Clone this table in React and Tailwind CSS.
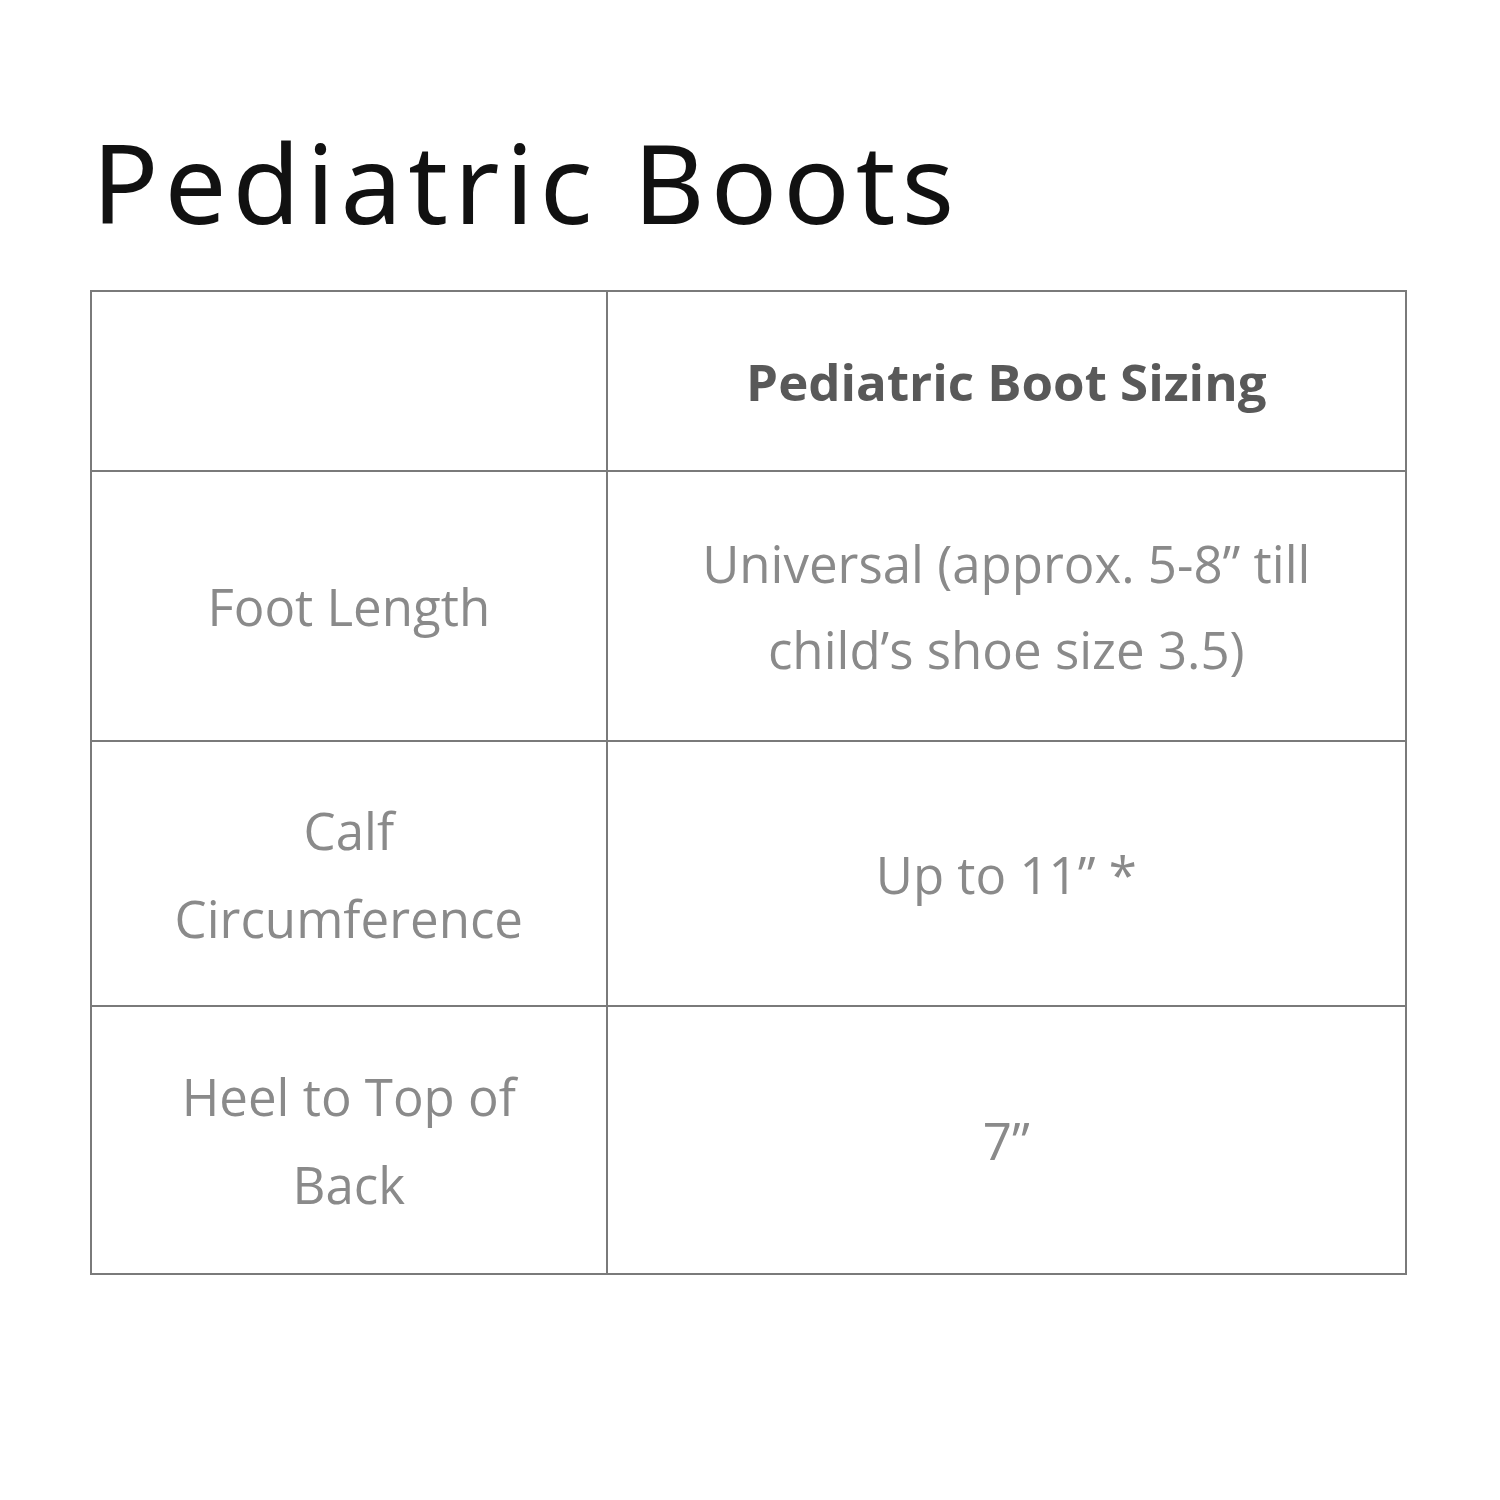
export default function App() {
  const cell = "border-2 border-[#7a7a7a] text-center align-middle px-4";
  const body = { fontFamily: '"Open Sans", "Noto Sans", sans-serif' };
  return (
    <div className="w-[1500px] h-[1500px] bg-white">
      <div className="pt-[116px] pl-[92px]">
        <h1
          className="text-[110px] leading-[130px] text-[#111] font-normal tracking-[6px]"
          style={{ fontFamily: '"Noto Sans", "Open Sans", sans-serif' }}
        >
          Pediatric Boots
        </h1>
      </div>
      <div className="pl-[90px] pt-[44px]">
        <table className="border-collapse w-[1317px] text-[#8a8a8a]" style={body}>
          <colgroup>
            <col className="w-[516px]" />
            <col className="w-[801px]" />
          </colgroup>
          <tbody>
            <tr className="h-[180px]">
              <td className={cell}></td>
              <td className={cell + " text-[51px] font-bold text-[#595959]"}>Pediatric Boot Sizing</td>
            </tr>
            <tr className="h-[270px]">
              <td className={cell + " text-[51px] leading-[86px]"}>Foot Length</td>
              <td className={cell + " text-[51px] leading-[86px]"}>
                Universal (approx. 5-8” till
                <br />
                child’s shoe size 3.5)
              </td>
            </tr>
            <tr className="h-[265px]">
              <td className={cell + " text-[51px] leading-[88px]"}>
                Calf
                <br />
                Circumference
              </td>
              <td className={cell + " text-[51px] leading-[86px]"}>Up to 11” *</td>
            </tr>
            <tr className="h-[268px]">
              <td className={cell + " text-[51px] leading-[88px]"}>
                Heel to Top of
                <br />
                Back
              </td>
              <td className={cell + " text-[51px] leading-[86px]"}>7”</td>
            </tr>
          </tbody>
        </table>
      </div>
    </div>
  );
}
